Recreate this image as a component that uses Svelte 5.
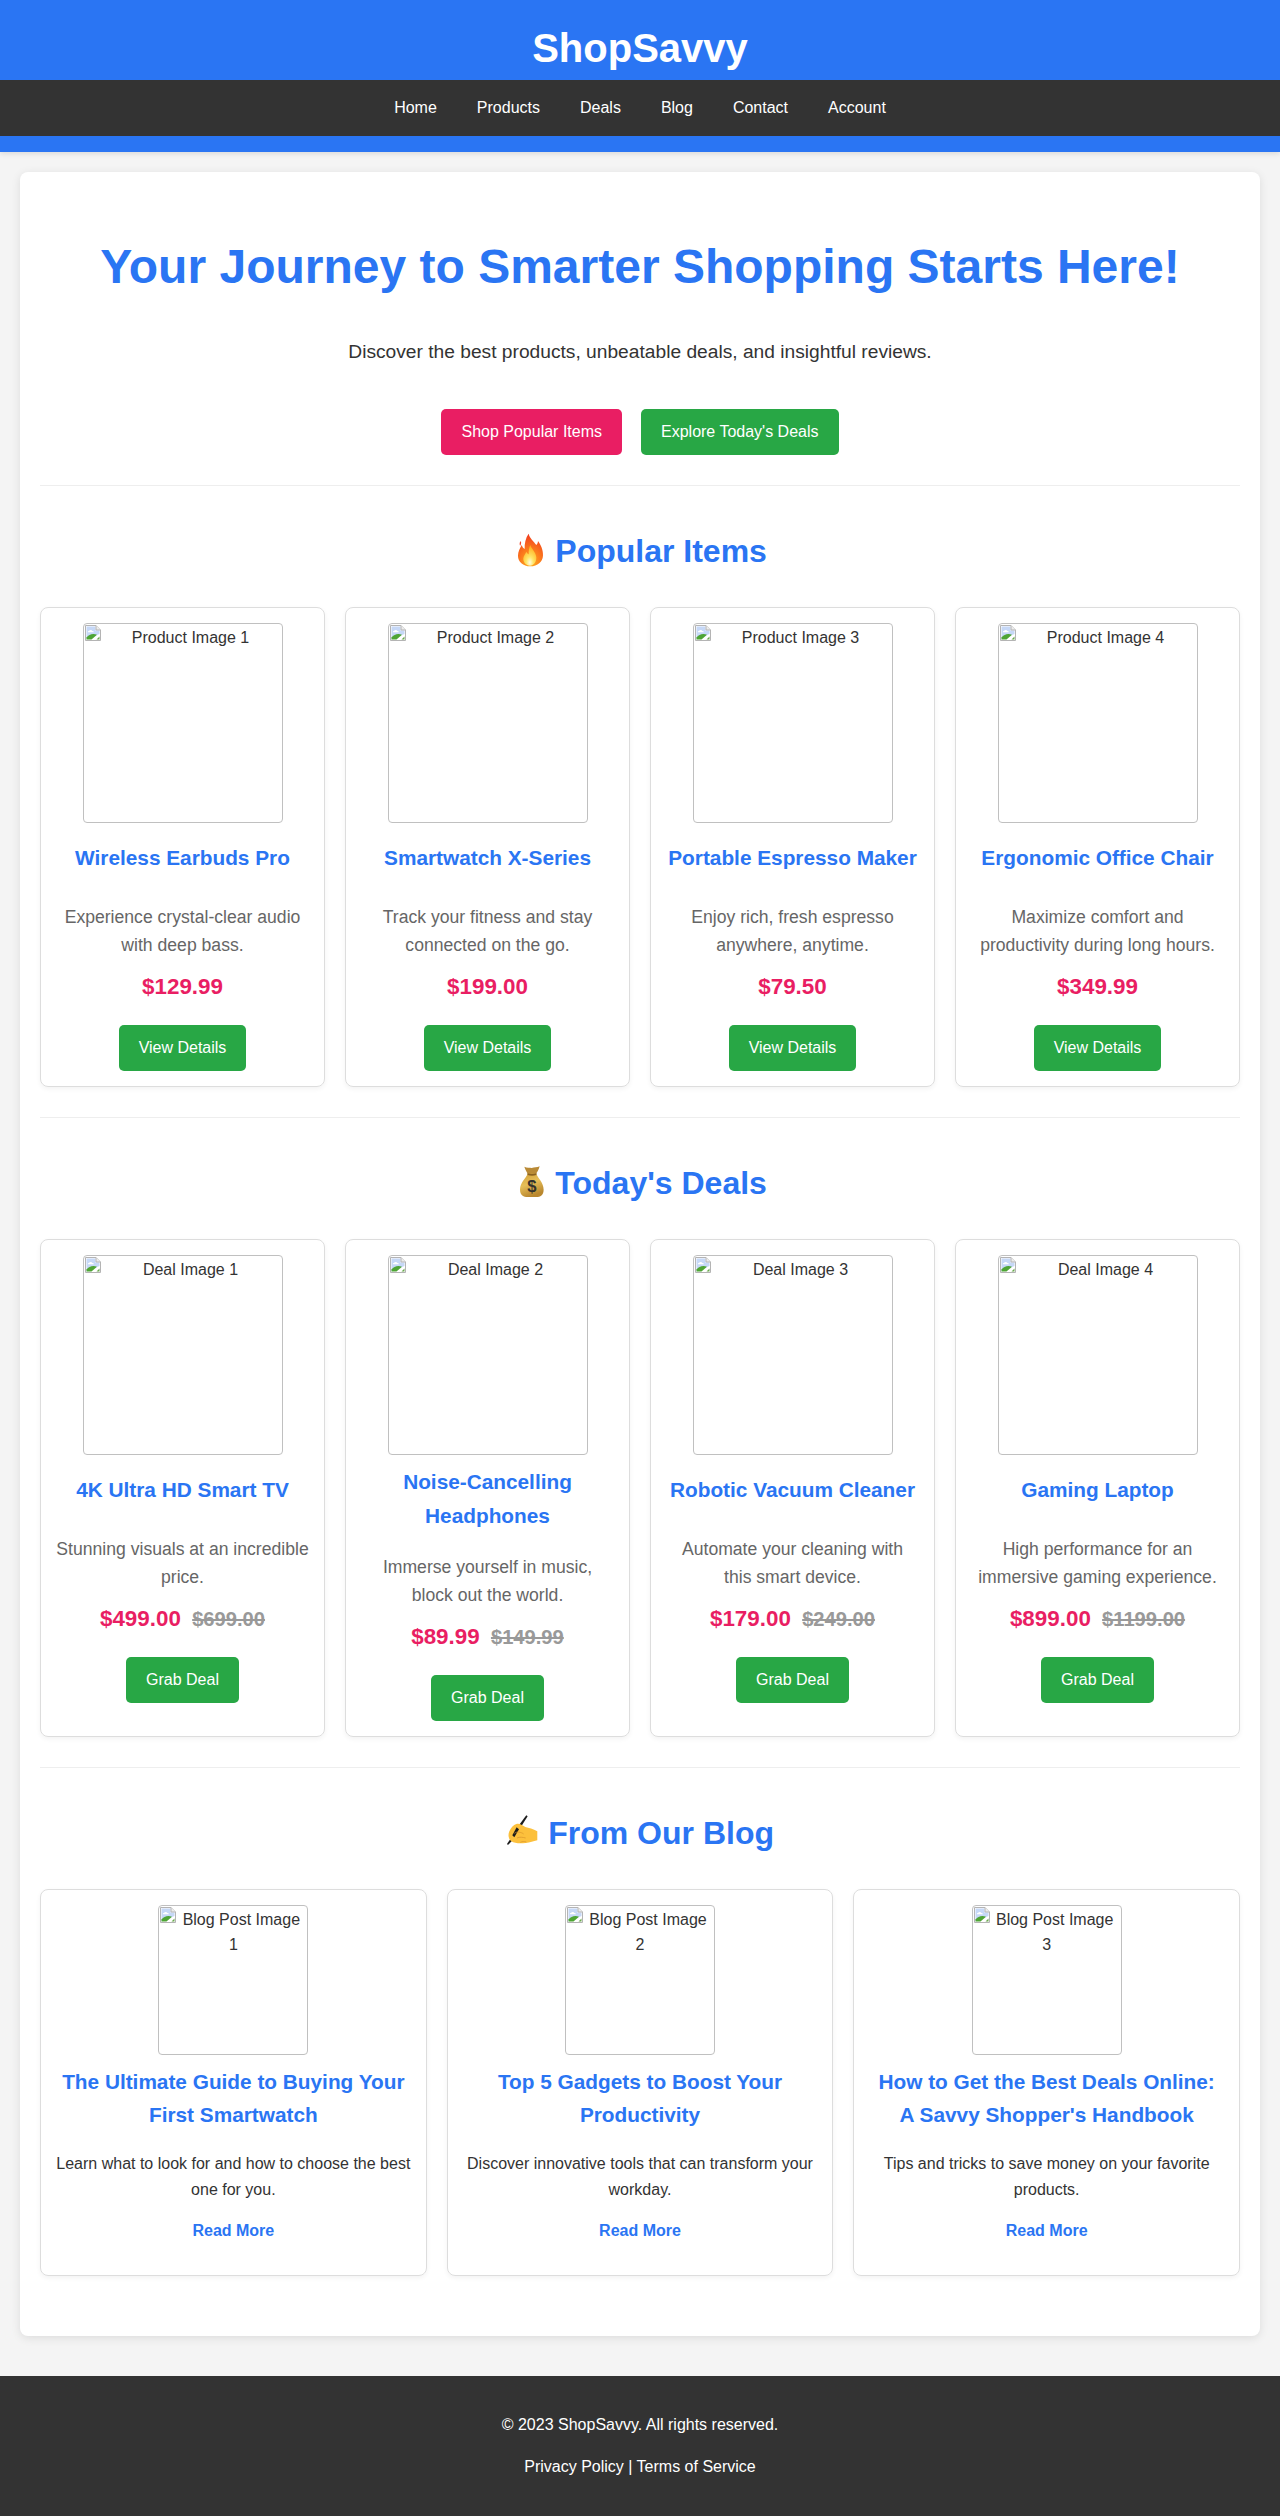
<script lang="ts">
	const nav = ['Home', 'Products', 'Deals', 'Blog', 'Contact', 'Account'];

	const products = [
		{ alt: 'Product Image 1', name: 'Wireless Earbuds Pro', text: 'Experience crystal-clear audio with deep bass.', price: '$129.99' },
		{ alt: 'Product Image 2', name: 'Smartwatch X-Series', text: 'Track your fitness and stay connected on the go.', price: '$199.00' },
		{ alt: 'Product Image 3', name: 'Portable Espresso Maker', text: 'Enjoy rich, fresh espresso anywhere, anytime.', price: '$79.50' },
		{ alt: 'Product Image 4', name: 'Ergonomic Office Chair', text: 'Maximize comfort and productivity during long hours.', price: '$349.99' }
	];

	const deals = [
		{ alt: 'Deal Image 1', name: '4K Ultra HD Smart TV', text: 'Stunning visuals at an incredible price.', price: '$499.00', old: '$699.00' },
		{ alt: 'Deal Image 2', name: 'Noise-Cancelling Headphones', text: 'Immerse yourself in music, block out the world.', price: '$89.99', old: '$149.99' },
		{ alt: 'Deal Image 3', name: 'Robotic Vacuum Cleaner', text: 'Automate your cleaning with this smart device.', price: '$179.00', old: '$249.00' },
		{ alt: 'Deal Image 4', name: 'Gaming Laptop', text: 'High performance for an immersive gaming experience.', price: '$899.00', old: '$1199.00' }
	];

	const posts = [
		{ alt: 'Blog Post Image 1', name: 'The Ultimate Guide to Buying Your First Smartwatch', text: 'Learn what to look for and how to choose the best one for you.' },
		{ alt: 'Blog Post Image 2', name: 'Top 5 Gadgets to Boost Your Productivity', text: 'Discover innovative tools that can transform your workday.' },
		{ alt: 'Blog Post Image 3', name: "How to Get the Best Deals Online: A Savvy Shopper's Handbook", text: 'Tips and tricks to save money on your favorite products.' }
	];
</script>

{#snippet placeholder(alt)}
	<div class="thumb-icon">
		<svg viewBox="0 0 16 16" width="16" height="16">
			<path d="M0.5 0.5H11L15.5 5V15.5H0.5Z" fill="#fff" stroke="#b4b4b4" />
			<path d="M1.500 1.500H10.500V5.500H14.500V9L1.500 14.500Z" fill="#c6d8f7" />
			<path d="M4 6c.6-1.300 2.800-1.300 3.400 0 .9 0 1.400.5 1.400 1.200H2.800C2.800 6.500 3.300 6 4 6Z" fill="#fff" />
			<path d="M1.500 14.500V12.500C4 9 8.500 8 12 9.800L6.500 14.500Z" fill="#4ea535" />
			<path d="M11.500 14.500L14.500 11.500V14.500Z" fill="#6aa84f" />
			<path d="M11 .5V5H15.500" fill="#ececec" stroke="#b4b4b4" />
		</svg>
	</div>
	{alt}
{/snippet}

<header class="site-header">
	<h1>ShopSavvy</h1>
	<nav>
		{#each nav as item}
			<a href="#top">{item}</a>
		{/each}
	</nav>
</header>

<main>
	<section class="hero">
		<h2>Your Journey to Smarter Shopping Starts Here!</h2>
		<p>Discover the best products, unbeatable deals, and insightful reviews.</p>
		<div class="hero-actions">
			<a class="btn pink" href="#top">Shop Popular Items</a>
			<a class="btn green" href="#top">Explore Today's Deals</a>
		</div>
	</section>

	<section class="block">
		<h2 class="section-title">
			<!-- emoji are drawn in 132px crop coords, hence the odd viewBox origins -->
			<svg class="emoji" viewBox="10 16 100 100">
				<defs>
					<radialGradient id="flame" cx="0.5" cy="0.9" r="0.95">
						<stop offset="0" stop-color="#ffb21e" />
						<stop offset="0.45" stop-color="#fb7a1c" />
						<stop offset="1" stop-color="#f0321f" />
					</radialGradient>
					<radialGradient id="flame-in" cx="0.5" cy="0.85" r="0.8">
						<stop offset="0" stop-color="#fffbe0" />
						<stop offset="0.35" stop-color="#ffe566" />
						<stop offset="1" stop-color="#ffab1a" />
					</radialGradient>
				</defs>
				<path d="M57 18C60 32 72 40 80 52C84 48 85 44 85 40C94 52 101 68 100 84C99 102 84 116 62 116C40 116 25 102 25 84C25 72 31 62 36 52C38 58 41 62 45 64C44 48 48 30 57 18Z" fill="url(#flame)" />
				<path d="M33 40C35 44 35 48 32 54C29 52 29 45 33 40Z" fill="#f4452a" />
				<path d="M62 52C64 62 78 72 80 88C81 103 72 114 61 114C49 114 40 104 41 92C42 84 47 79 50 72C52 76 54 78 57 80C57 70 58 60 62 52Z" fill="url(#flame-in)" />
			</svg>
			Popular Items
		</h2>
		<div class="grid four">
			{#each products as p}
				<article class="card">
					<div class="thumb">{@render placeholder(p.alt)}</div>
					<h3>{p.name}</h3>
					<p class="desc">{p.text}</p>
					<p class="price">{p.price}</p>
					<a class="btn green" href="#top">View Details</a>
				</article>
			{/each}
		</div>
	</section>

	<section class="block">
		<h2 class="section-title">
			<svg class="emoji" viewBox="8 16 100 100">
				<defs>
					<linearGradient id="bag" x1="0" y1="0" x2="0.4" y2="1">
						<stop offset="0" stop-color="#d2a038" />
						<stop offset="0.5" stop-color="#e6be58" />
						<stop offset="1" stop-color="#b9872e" />
					</linearGradient>
				</defs>
				<path d="M42 21C50 25 58 23 64 25C72 23 80 24 88 20C86 30 80 38 77 44H53C50 38 45 30 42 21Z" fill="#b98a36" />
				<path d="M52 42H78C82 54 100 68 100 90C100 106 90 112 78 112H52C40 112 29 106 29 90C29 68 48 54 52 42Z" fill="url(#bag)" />
				<path d="M51 41C60 44 70 44 79 41L78 46C70 49 60 49 52 46Z" fill="#8a611f" />
				<text x="65" y="98" text-anchor="middle" font-family="Liberation Sans, sans-serif" font-weight="700" font-size="50" fill="#33312c">$</text>
			</svg>
			Today's Deals
		</h2>
		<div class="grid four deals">
			{#each deals as d}
				<article class="card">
					<div class="thumb">{@render placeholder(d.alt)}</div>
					<h3>{d.name}</h3>
					<p class="desc">{d.text}</p>
					<p class="price">{d.price} <span class="old">{d.old}</span></p>
					<a class="btn green" href="#top">Grab Deal</a>
				</article>
			{/each}
		</div>
	</section>

	<section class="block last">
		<h2 class="section-title">
			<svg class="emoji" viewBox="19 17 100 100">
				<path d="M80 18L84 21L58 62L51 57Z" fill="#1c1c1c" />
				<path d="M38 80L46 85L25 107L22 104Z" fill="#1c1c1c" />
				<path d="M29 66C33 56 41 47 50 44C58 40 70 48 77 53C87 56 101 58 113 66V93C101 96 92 100 78 101C64 103 45 103 35 96C29 91 23 80 29 66Z" fill="#fcc03c" />
				<path d="M58 60L51 54L38 78L44 84Z" fill="#1c1c1c" />
				<path d="M44 72C52 66 64 68 72 74M52 86C60 82 70 84 78 86M62 99C68 96 74 96 80 98" fill="none" stroke="#d8922a" stroke-width="2" />
			</svg>
			From Our Blog
		</h2>
		<div class="grid three">
			{#each posts as b}
				<article class="card">
					<div class="thumb small">{@render placeholder(b.alt)}</div>
					<h3>{b.name}</h3>
					<p class="post-text">{b.text}</p>
					<p class="more"><a href="#top">Read More</a></p>
				</article>
			{/each}
		</div>
	</section>
</main>

<footer>
	<p>© 2023 ShopSavvy. All rights reserved.</p>
	<p><a href="#top">Privacy Policy</a> | <a href="#top">Terms of Service</a></p>
</footer>

<style>
	:global(body) {
		margin: 0;
		background: #f4f4f4;
		color: #333;
		font-family: "Liberation Sans", Arial, sans-serif;
		line-height: 1.6;
	}

	a {
		text-decoration: none;
	}

	.site-header {
		background: #2a75f3;
		color: #fff;
		padding: 16px 0;
		text-align: center;
		box-shadow: 0 2px 5px rgba(0, 0, 0, 0.1);
	}

	.site-header h1 {
		margin: 0;
		font-size: 40px;
		line-height: 64px;
	}

	nav {
		background: #333;
		display: flex;
		justify-content: center;
		gap: 40px;
		padding: 15px 0;
	}

	nav a {
		color: #fff;
	}

	main {
		margin: 20px;
		padding: 20px;
		background: #fff;
		border-radius: 8px;
		box-shadow: 0 2px 10px rgba(0, 0, 0, 0.1);
	}

	.hero {
		text-align: center;
		padding: 37px 0 30px;
		border-bottom: 1px solid #eee;
		margin-bottom: 40px;
	}

	.hero h2 {
		margin: 0 0 32px;
		color: #2a75f3;
		font-size: 48px;
		line-height: 1.6;
	}

	.hero p {
		margin: 0 0 41px;
		font-size: 19.2px;
	}

	.hero-actions {
		display: flex;
		justify-content: center;
		gap: 19px;
	}

	.btn {
		display: inline-block;
		padding: 10px 20px;
		border-radius: 5px;
		color: #fff;
	}

	.pink {
		background: #e91e63;
	}

	.green {
		background: #28a745;
	}

	.block {
		padding-bottom: 30px;
		border-bottom: 1px solid #eee;
		margin-bottom: 40px;
	}

	.block.last {
		border-bottom: 0;
		margin-bottom: 0;
		padding-bottom: 40px;
	}

	.section-title {
		margin: 0 0 30px;
		color: #2a75f3;
		font-size: 32px;
		text-align: center;
	}

	.emoji {
		display: inline-block;
		width: 33.3px;
		height: 33.3px;
		vertical-align: -4.4px;
		overflow: visible;
	}

	.grid {
		display: grid;
		gap: 20px;
	}

	.four {
		grid-template-columns: repeat(4, 1fr);
	}

	.three {
		grid-template-columns: repeat(3, 1fr);
	}

	.card {
		border: 1px solid #ddd;
		border-radius: 8px;
		padding: 15px;
		text-align: center;
		box-shadow: 0 2px 5px rgba(0, 0, 0, 0.05);
	}

	.thumb {
		box-sizing: border-box;
		width: 200px;
		height: 200px;
		margin: 0 auto 10px;
		padding: 1px;
		border: 1px solid #c0c0c0;
		border-radius: 4px;
		overflow: hidden;
	}

	.thumb.small {
		width: 150px;
		height: 150px;
	}

	.thumb-icon {
		float: left;
		width: 16px;
		height: 16px;
	}

	.thumb-icon svg {
		display: block;
	}

	h3 {
		display: flex;
		align-items: center;
		justify-content: center;
		min-height: 50px;
		margin: 0 0 20px;
		color: #2a75f3;
		font-size: 20.8px;
	}

	.deals h3 {
		line-height: 34px;
	}

	.desc {
		margin: 0 0 10px;
		color: #666;
		font-size: 17.6px;
	}

	.price {
		margin: 0 0 20px;
		color: #e91e63;
		font-size: 22.4px;
		font-weight: 700;
	}

	.old {
		margin-left: 5px;
		color: #999;
		font-size: 20.16px;
		text-decoration: line-through;
	}

	.post-text {
		margin: 0 0 16px;
	}

	.more {
		margin: 0 0 16px;
	}

	.more a {
		color: #2a75f3;
		font-weight: 700;
	}

	footer {
		margin-top: 40px;
		padding: 20px 0 21px;
		background: #333;
		color: #fff;
		text-align: center;
	}

	footer p {
		margin: 16px 0;
	}

	footer a {
		color: #fff;
	}
</style>
